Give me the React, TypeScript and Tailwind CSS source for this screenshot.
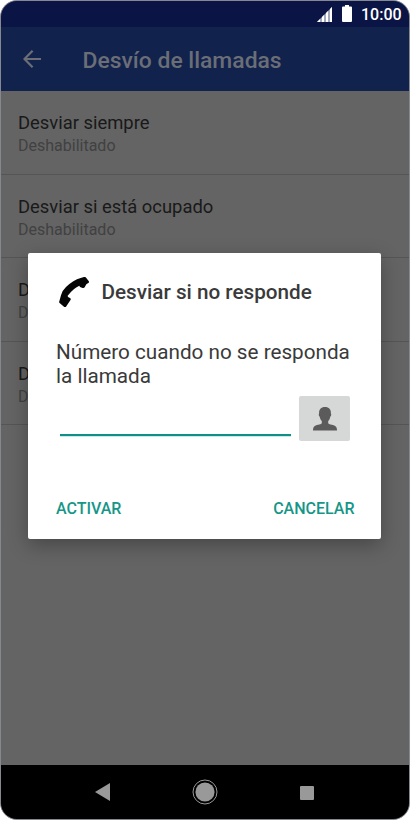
import React from "react";

const rows = [
  { title: "Desviar siempre", status: "Deshabilitado" },
  { title: "Desviar si está ocupado", status: "Deshabilitado" },
  { title: "D", status: "D" },
  { title: "D", status: "D" },
];

function StatusBar() {
  return (
    <div className="flex h-[26px] shrink-0 items-start justify-end bg-[#0a1445] text-white">
      <svg className="mt-[6px] h-[15px] w-[15px]" viewBox="0 0 15 15">
        <path d="M0 15 15 0v15z" fill="#a4a8bb" />
        <path d="M0 15 3 12V15zM5 10 7 8V15H5zM9 6 11 4V15H9zM13 2 15 0v15h-2z" fill="#fff" />
      </svg>
      <svg className="ml-[10px] mt-1 h-[17px] w-[10px]" viewBox="0 0 10 17">
        <path d="M3 0h4v1.5h2q1 0 1 1V16q0 1-1 1H1q-1 0-1-1V2.500q0-1 1-1h2z" fill="#fff" />
      </svg>
      <span className="ml-[9px] mr-[8px] mt-[3px] w-[40px] whitespace-nowrap text-[16px] font-medium leading-[21px]">10:00</span>
    </div>
  );
}

function Header() {
  return (
    <header className="flex h-16 shrink-0 items-center bg-[#11224d] text-[#6b6e76]">
      <svg className="ml-[22px] h-[18px] w-[18px]" viewBox="0 0 18 18" fill="none" stroke="currentColor" strokeWidth="2.2">
        <path d="M9.6 .8 1.5 9l8.1 8.2M1.500 9H18" />
      </svg>
      <h1 className="ml-[41.5px] mt-[4px] whitespace-nowrap text-[22.9px] font-medium leading-7">Desvío de llamadas</h1>
    </header>
  );
}

function Dialog() {
  return (
    <section className="absolute left-[27px] top-[252px] flex h-[286px] w-[353px] flex-col rounded-[2px] bg-white text-[#3a3a3a] shadow-[0_6px_20px_rgba(0,0,0,0.3)]">
      <div className="flex h-[78px] items-center pl-[31px]">
        <svg className="h-[30px] w-[30px]" viewBox="27 33 90 90">
          <path d="M92 36 102 33q3-1 5 1l9 11q2 3 0 5l-7 5-5 9q-2 3-6 2l-8-3-2-4q-16 6-35 30l1 4 6 3q3 2 2 5l-14 21q-3 3-6 0L28 110q-1-2 0-4l5-18q3-14 15-25Q70 42 92 36z" fill="#050505" />
        </svg>
        <h2 className="ml-[12.5px] whitespace-nowrap text-[20.7px] font-medium leading-6">Desviar si no responde</h2>
      </div>
      <p className="ml-[28px] mt-[9px] whitespace-nowrap text-[20.7px] leading-6">
        Número cuando no se responda<br />la llamada
      </p>
      <div className="ml-[32px] mt-[8px] flex h-[46px]">
        <div className="h-[40px] w-[231px] border-b-2 border-[#11908a] shadow-[0_1px_0_#c2edeb]" />
        <button className="ml-[8px] flex h-[45px] w-[51px] items-center justify-center rounded-[2px] bg-[#d6d8d7]">
          <svg className="h-6 w-6" viewBox="0 0 24 24">
            <path d="M12 0c4 0 6.200 2.400 5.900 6.500.7.8.3 2.600-.6 3.200-.4 1.900-1 3.200-2.100 4.200v2.300c1.100 1.500 6 1.400 7.800 3.500.8 1 1 2.200 1 3.800H0c0-1.600.2-2.800 1-3.800 1.800-2.100 6.700-2 7.800-3.500v-2.300c-1.100-1-1.700-2.300-2.100-4.200-.9-.6-1.300-2.400-.6-3.200C5.800 2.400 8 0 12 0z" fill="#5c5b5b" />
          </svg>
        </button>
      </div>
      <div className="ml-[28px] mr-[26.500px] mt-[57px] flex justify-between text-[16px] font-medium leading-5 text-[#159688]">
        <button>ACTIVAR</button>
        <button>CANCELAR</button>
      </div>
    </section>
  );
}

function NavBar() {
  return (
    <nav className="flex h-[54px] shrink-0 items-center bg-black text-[#999]">
      <svg className="ml-[94px] h-[18px] w-[15px]" viewBox="0 0 15 18"><path d="M0 9 15 0v18z" fill="currentColor" /></svg>
      <svg className="ml-[82px] h-[26px] w-[26px]" viewBox="0 0 26 26">
        <circle cx="13" cy="13" r="12" fill="none" stroke="currentColor" />
        <circle cx="13" cy="13" r="9.6" fill="currentColor" />
      </svg>
      <div className="ml-[82px] mt-px h-[14px] w-[14px] rounded-[1px] bg-[#999]" />
    </nav>
  );
}

export default function App() {
  return (
    <div className="h-[820px] w-[410px] bg-white font-['Roboto',sans-serif]">
      <main className="relative flex h-[820px] w-[410px] flex-col overflow-hidden rounded-[17px] border border-[#858891] bg-[#646464]">
        <StatusBar />
        <Header />
        <div className="flex-1">
          {rows.map((row, index) => (
            <div key={index} className="h-[83.6px] border-b border-[#555] pl-[17px] pt-[20px]">
              <div className="text-[18.4px] leading-[24px] text-[#191919]">{row.title}</div>
              <div className="text-[16px] leading-[22px] text-[#414141]">{row.status}</div>
            </div>
          ))}
        </div>
        <NavBar />
        <Dialog />
      </main>
    </div>
  );
}
